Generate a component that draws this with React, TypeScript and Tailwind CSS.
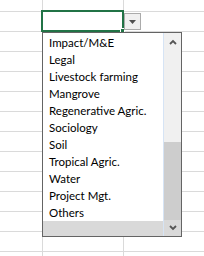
import React from 'react';

const items = [
  'Impact/M&E',
  'Legal',
  'Livestock farming',
  'Mangrove',
  'Regenerative Agric.',
  'Sociology',
  'Soil',
  'Tropical Agric.',
  'Water',
  'Project Mgt.',
  'Others',
];

const Chevron = ({ up }: { up?: boolean }) => (
  <svg width="8" height="6" viewBox="0 0 8 6">
    <polyline
      points={up ? '1,5 4,2 7,5' : '1,1 4,4 7,1'}
      fill="none"
      stroke="#555"
      strokeWidth="1.8"
    />
  </svg>
);

export default function App() {
  const rows = Array.from({ length: 14 });

  return (
    <div
      className="relative w-[204px] h-[256px] overflow-hidden bg-white"
      style={{ fontFamily: '"Segoe UI", Lato, "Noto Sans", sans-serif' }}
    >
      {/* sheet grid */}
      {rows.map((_, i) => (
        <div
          key={i}
          className={`flex border-b border-[#dadada] ${i === 0 ? 'h-[12px]' : 'h-[20px]'}`}
        >
          <div className="w-[43px] shrink-0 border-r border-[#dadada]" />
          <div className="w-[81px] shrink-0 border-r border-[#dadada]" />
          <div className="w-[81px] shrink-0 border-r border-[#dadada]" />
        </div>
      ))}

      {/* selected cell */}
      <div className="absolute left-[41px] top-[10px] w-[83px] h-[22px] border-2 border-[#217346]" />
      <div className="absolute left-[120px] top-[28px] w-[5px] h-[5px] bg-[#217346] border border-white" />

      {/* dropdown button */}
      <div className="absolute left-[124px] top-[13px] w-[17px] h-[17px] flex items-center justify-center bg-[#f0f0f0] border border-[#ababab]">
        <svg width="7" height="4" viewBox="0 0 7 4">
          <polygon points="0,0 7,0 3.5,4" fill="#505050" />
        </svg>
      </div>

      {/* list box */}
      <div className="absolute left-[42px] top-[32px] w-[140px] h-[205px] flex bg-white border border-[#646464]">
        <div className="flex-1 flex flex-col pt-[1px]">
          {items.map((item) => (
            <div key={item} className="h-[17px] flex items-center pl-[6px] text-[11.5px] text-black leading-none whitespace-nowrap">
              {item}
            </div>
          ))}
          <div className="flex-1 bg-[#d9d9d9]" />
        </div>
        <div className="w-[1px] bg-[#d6e4f5]" />
        <div className="w-[17px] flex flex-col bg-[#f0f0f0]">
          <div className="h-[17px] flex items-center justify-center">
            <Chevron up />
          </div>
          <div className="flex-1 flex flex-col">
            <div className="h-[92px]" />
            <div className="flex-1 bg-[#cdcdcd]" />
          </div>
          <div className="h-[16px] flex items-center justify-center bg-[#d9d9d9]">
            <Chevron />
          </div>
        </div>
      </div>
    </div>
  );
}
